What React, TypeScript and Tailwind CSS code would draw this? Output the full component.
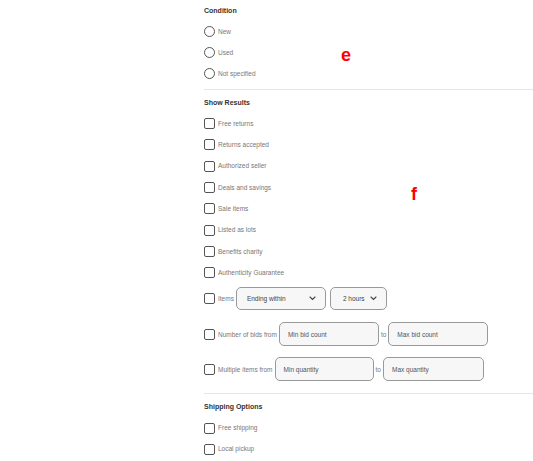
import React from 'react'

const font = { fontFamily: '"Liberation Sans", Arial, sans-serif' }

function Chevron() {
  return (
    <svg width="7" height="5" viewBox="0 0 7 5" className="shrink-0">
      <path d="M1 1 L3.5 3.5 L6 1" fill="none" stroke="#444" strokeWidth="1.1" strokeLinecap="round" />
    </svg>
  )
}

function Radio({ label }: { label: string }) {
  return (
    <div className="flex items-center h-[21px]">
      <span className="w-[11px] h-[11px] rounded-full border border-[#555] shrink-0" />
      <span className="ml-[3px] text-[6.5px] text-[#777]">{label}</span>
    </div>
  )
}

function Check({ label }: { label: string }) {
  return (
    <div className="flex items-center h-[21.3px]">
      <span className="w-[11px] h-[11px] rounded-[2px] border border-[#555] shrink-0" />
      <span className="ml-[3px] text-[6.5px] text-[#777]">{label}</span>
    </div>
  )
}

function Heading({ children }: { children: React.ReactNode }) {
  return <div className="h-[20px] flex items-center text-[7px] font-bold text-[#333]">{children}</div>
}

function Field({ label, w }: { label: string; w: string }) {
  return (
    <div className={`${w} h-[24px] rounded-[5px] border border-[#999] bg-[#f7f7f7] flex items-center pl-[8px] text-[6.5px] text-[#555]`}>
      {label}
    </div>
  )
}

export default function App() {
  return (
    <div className="relative w-[533px] h-[461px] bg-white overflow-hidden" style={font}>
      <div className="ml-[204px] pt-[1px] flex flex-col">
        <Heading>Condition</Heading>
        <Radio label="New" />
        <Radio label="Used" />
        <Radio label="Not specified" />
        <div className="mt-[5px] h-px bg-[#e6e6e6]" />

        <div className="mt-[3px]"><Heading>Show Results</Heading></div>
        <Check label="Free returns" />
        <Check label="Returns accepted" />
        <Check label="Authorized seller" />
        <Check label="Deals and savings" />
        <Check label="Sale items" />
        <Check label="Listed as lots" />
        <Check label="Benefits charity" />
        <Check label="Authenticity Guarantee" />

        <div className="mt-[4px] flex items-center h-[23px]">
          <span className="w-[11px] h-[11px] rounded-[2px] border border-[#555] shrink-0" />
          <span className="ml-[3px] text-[6.5px] text-[#777]">Items</span>
          <div className="ml-[2px] w-[90px] h-[23px] rounded-[5px] border border-[#999] bg-[#f7f7f7] flex items-center justify-between pl-[10px] pr-[9px] text-[6.5px] text-[#444]">
            <span>Ending within</span>
            <Chevron />
          </div>
          <div className="ml-[4px] w-[57px] h-[23px] rounded-[5px] border border-[#999] bg-[#f7f7f7] flex items-center justify-between pl-[12px] pr-[9px] text-[6.5px] text-[#444]">
            <span>2 hours</span>
            <Chevron />
          </div>
        </div>

        <div className="mt-[12px] flex items-center h-[24px]">
          <span className="w-[11px] h-[11px] rounded-[2px] border border-[#555] shrink-0" />
          <span className="ml-[3px] text-[6.5px] text-[#777]">Number of bids from</span>
          <div className="ml-[2px]"><Field label="Min bid count" w="w-[100px]" /></div>
          <span className="mx-[2px] text-[6.5px] text-[#777]">to</span>
          <Field label="Max bid count" w="w-[100px]" />
        </div>

        <div className="mt-[11px] flex items-center h-[24px]">
          <span className="w-[11px] h-[11px] rounded-[2px] border border-[#555] shrink-0" />
          <span className="ml-[3px] text-[6.5px] text-[#777]">Multiple items from</span>
          <div className="ml-[2px]"><Field label="Min quantity" w="w-[99px]" /></div>
          <span className="mx-[2px] text-[6.5px] text-[#777]">to</span>
          <Field label="Max quantity" w="w-[101px]" />
        </div>

        <div className="mt-[12px] h-px bg-[#e6e6e6]" />
        <div className="mt-[3px]"><Heading>Shipping Options</Heading></div>
        <Check label="Free shipping" />
        <Check label="Local pickup" />
      </div>

      <span className="absolute left-[341px] top-[46px] text-[18px] font-bold text-[#f00] leading-none">e</span>
      <span className="absolute left-[411px] top-[185px] text-[18px] font-bold text-[#f00] leading-none">f</span>
    </div>
  )
}
